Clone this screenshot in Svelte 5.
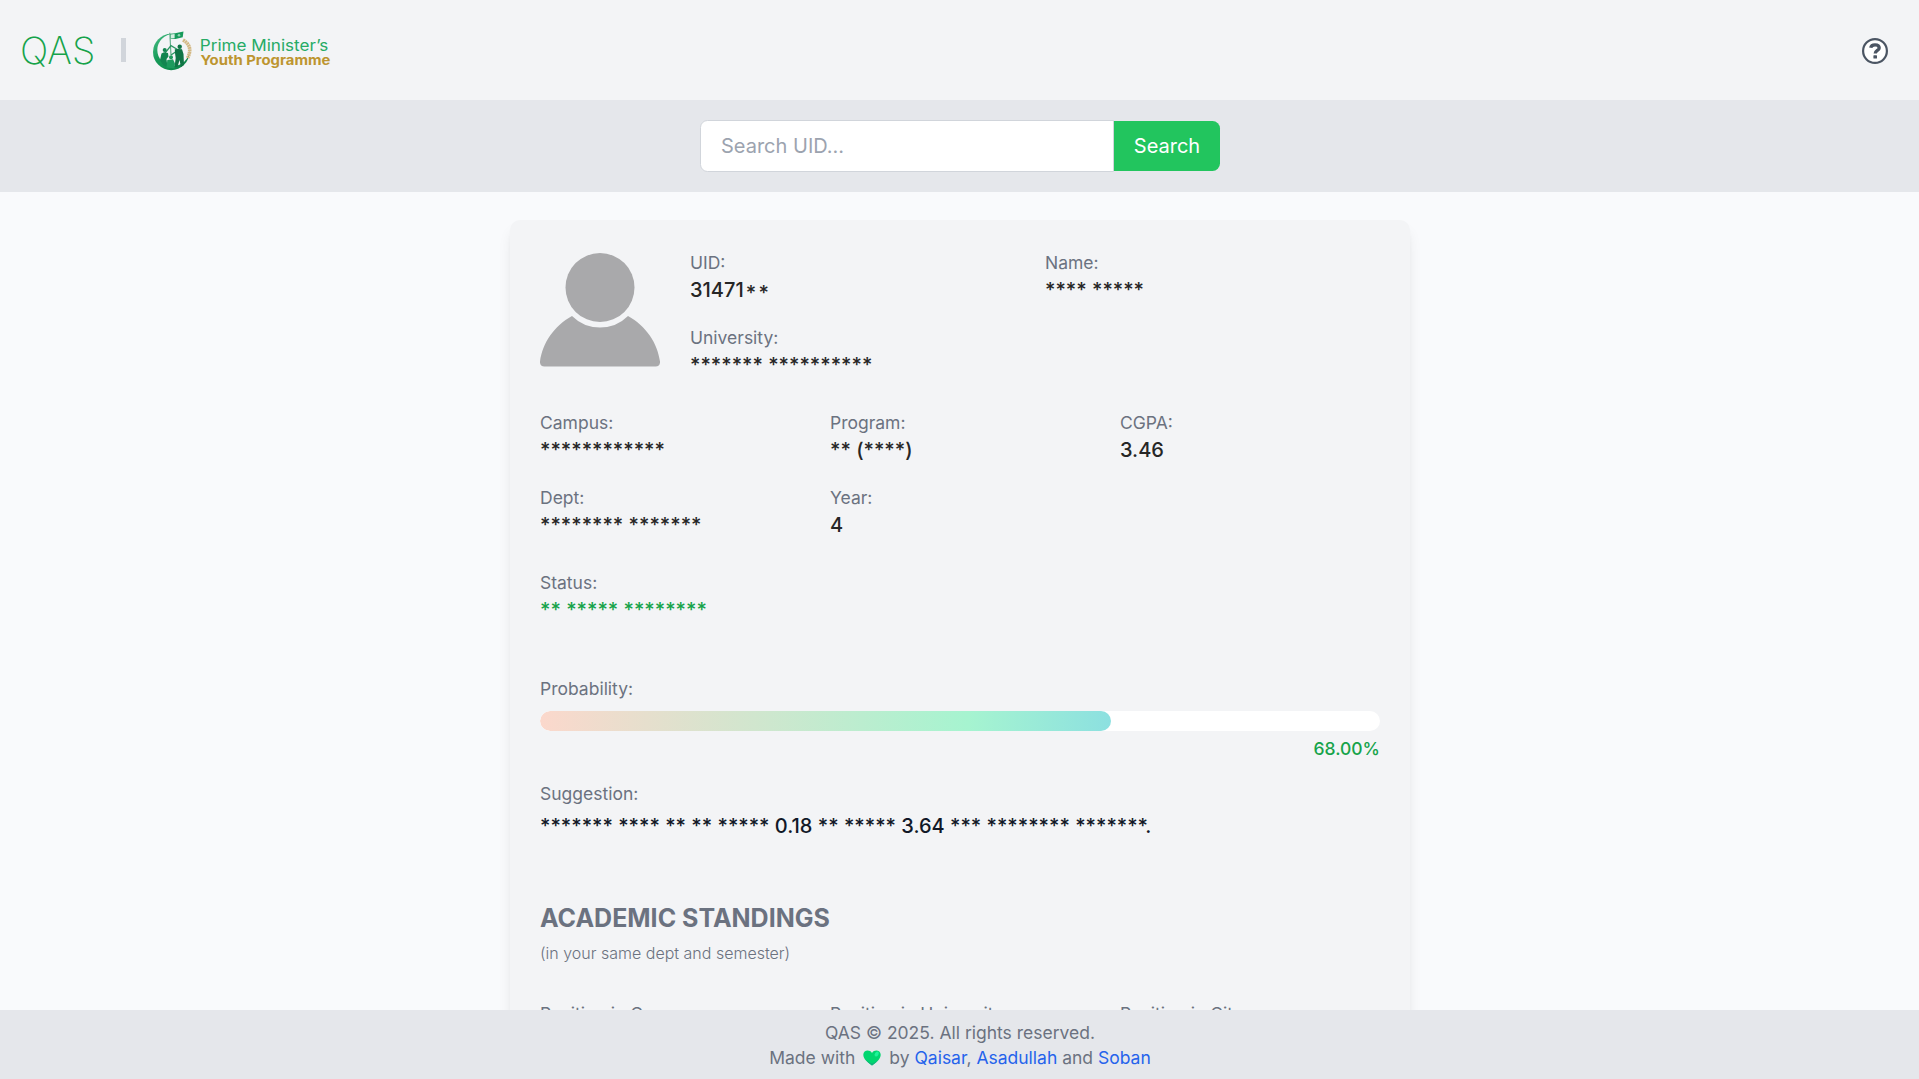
<script>
  const identity = [
    { label: 'UID:', value: '31471', masked: '**' },
    { label: 'Name:', value: '**** *****' },
    { label: 'University:', value: '******* **********' }
  ];
  const details = [
    { label: 'Campus:', value: '************' },
    { label: 'Program:', value: '** (****)' },
    { label: 'CGPA:', value: '3.46' },
    { label: 'Dept:', value: '******** *******' },
    { label: 'Year:', value: '4' }
  ];
  const standings = ['Position in Campus:', 'Position in University:', 'Position in City:'];
  const probability = 68;
</script>

<div class="page">
  <header class="topbar">
    <span class="brand">QAS</span>
    <span class="divider"></span>
    <svg class="programme" width="180" height="50" viewBox="0 0 180 50" aria-label="Prime Minister's Youth Programme">
      <defs>
        <linearGradient id="ring" x1="0" y1="0" x2="1" y2="1">
          <stop offset="0" stop-color="#4cc088" />
          <stop offset=".4" stop-color="#169a58" />
          <stop offset="1" stop-color="#0b8046" />
        </linearGradient>
        <mask id="crescent">
          <rect width="50" height="50" fill="#fff" />
          <circle cx="20.300" cy="25" r="16" fill="#000" />
        </mask>
      </defs>
      <circle cx="18.200" cy="27" r="18.200" fill="url(#ring)" mask="url(#crescent)" />
      <path d="M17 9L22 8.300L30.500 6.500L29.700 12.300L22.500 13.900L17.500 14Z" fill="#179a5b" />
      <path d="M17.600 9.400L21.600 8.900V13.200L17.900 13.400Z" fill="#d5eee1" />
      <circle cx="26" cy="10.300" r="1.300" fill="#8fd2b0" />
      <path d="M16.800 7.800L18 30" fill="none" stroke="#5aa983" stroke-width="1.100" />
      <path d="M30 15Q40.500 21 34.600 33" fill="none" stroke="#d3b883" stroke-width="3.600" stroke-dasharray="1.900 .5" />
      <path d="M12 28L18 20.700L24.500 24.500M18 30L22.500 27" fill="none" stroke="#2a9561" stroke-width="1.300" />
      <circle cx="11.700" cy="25" r="2" fill="#138550" />
      <path d="M8.500 28.500L11 27.200L15 28L15.500 31.500L13.500 34L14.500 42L10 40L7 35Z" fill="#138550" />
      <circle cx="26.700" cy="21.800" r="2.200" fill="#0f7445" />
      <path d="M21.800 24.300L25 24L29 24.300L30.500 29L31 40L28 42L26.500 35L24.500 42H21.500L22.700 33L22 28Z" fill="#0f7445" />
      <circle cx="18" cy="32.300" r="2" fill="#1d9a5d" />
      <path d="M14.300 35L20 34.300L22 38.500L21.500 43.500L13.500 42.500Z" fill="#1d9a5d" />
      <text class="pm" x="46.800" y="26" textLength="128.500" lengthAdjust="spacingAndGlyphs">Prime Minister’s</text>
      <text class="yp" x="47.400" y="40.300" textLength="130" lengthAdjust="spacingAndGlyphs">Youth Programme</text>
    </svg>
    <button class="help" aria-label="Help">
      <svg width="26" height="26" viewBox="0 0 26 26">
        <circle cx="13" cy="13" r="11.900" fill="#fff" stroke="#4b5563" stroke-width="2.200" />
        <path d="M8.700 9.700C9.100 7.600 10.600 6.800 13 6.800C15.700 6.800 17.200 8 17.200 9.900C17.200 12.500 13.200 12.400 13.200 15.600" fill="none" stroke="#4b5563" stroke-width="3.300" />
        <rect x="11.400" y="17.200" width="3.600" height="3.400" rx=".6" fill="#4b5563" />
      </svg>
    </button>
  </header>

  <form class="searchbar">
    <input type="text" placeholder="Search UID..." />
    <button type="button">Search</button>
  </form>

  <main>
    <article class="card">
      <section class="profile">
        <svg width="120" height="120" viewBox="0 0 120 120" aria-hidden="true">
          <circle cx="60" cy="37.500" r="34.500" fill="#a9a9ab" />
          <path d="M32 66Q43.500 77.500 60 77.500T88 66C106 76 117.500 93 120 111.500Q120.300 116.500 115.500 116.500H4.500Q-.3 116.500 0 111.500C2.500 93 14 76 32 66Z" fill="#a9a9ab" />
        </svg>
        <dl class="pairs">
          {#each identity as item}
            <div>
              <dt>{item.label}</dt>
              <dd>{item.value}{#if item.masked}<span class="masked">{item.masked}</span>{/if}</dd>
            </div>
          {/each}
        </dl>
      </section>

      <dl class="triples details">
        {#each details as item}
          <div><dt>{item.label}</dt><dd>{item.value}</dd></div>
        {/each}
      </dl>

      <dl class="status">
        <dt>Status:</dt>
        <dd>** ***** ********</dd>
      </dl>

      <section class="probability">
        <p class="label">Probability:</p>
        <div class="track"><div class="fill" style="width: {probability}%"></div></div>
        <p class="percent">{probability.toFixed(2)}%</p>
      </section>

      <section class="suggestion">
        <p class="label">Suggestion:</p>
        <p class="advice">******* **** ** ** ***** 0.18 ** ***** 3.64 *** ******** *******.</p>
      </section>

      <section class="standings">
        <h2>ACADEMIC STANDINGS</h2>
        <p class="note">(in your same dept and semester)</p>
        <dl class="triples">
          {#each standings as label}
            <div><dt>{label}</dt></div>
          {/each}
        </dl>
      </section>
    </article>
  </main>

  <footer>
    <p>QAS © 2025. All rights reserved.</p>
    <p class="credits">
      <span>Made with</span>
      <svg width="18" height="16" viewBox="0 0 18 16" aria-label="love">
        <path d="M9 15.500C4.500 12.500 .3 9 .3 4.800C.3 .2 6.500-.9 9 3C11.500-.9 17.700 .2 17.700 4.800C17.700 9 13.500 12.500 9 15.500Z" fill="#00d66f" />
        <path d="M2 8.500C3.500 11.500 6.500 13.700 9 15.500C12 13.500 14.500 11.500 16 9C13 12 11 13 9 13.500C6.500 12.500 4 11 2 8.500Z" fill="#12b27c" />
        <ellipse cx="13.700" cy="4" rx="1.800" ry="2.700" transform="rotate(32 13.700 4)" fill="#1cf59a" />
      </svg>
      <span>by <a href="#qaisar">Qaisar</a>, <a href="#asadullah">Asadullah</a> and <a href="#soban">Soban</a></span>
    </p>
  </footer>
</div>

<style>
  :global(body) {
    margin: 0;
    overflow: hidden;
  }
  .page {
    display: flex;
    flex-direction: column;
    height: 100vh;
    overflow: hidden;
    background: #f9fafc;
    color: #111827;
    font-family: Inter, sans-serif;
    font-size: 20px;
    line-height: 30px;
  }
  .page * {
    box-sizing: border-box;
  }
  p, h2, dl, dd {
    margin: 0;
  }
  .topbar {
    flex: none;
    display: flex;
    align-items: center;
    height: 100px;
    padding: 0 31px 0 20px;
    background: #f3f4f6;
  }
  .brand {
    width: 101px;
    color: #16a34a;
    font-size: 37.5px;
    font-weight: 200;
    line-height: 45px;
  }
  .divider {
    width: 5px;
    height: 24px;
    background: #d1d5db;
  }
  .programme {
    margin-left: 27px;
  }
  .pm, .yp {
    font-family: Inter, sans-serif;
  }
  .pm {
    fill: #27ab66;
    font-size: 16px;
  }
  .yp {
    fill: #bd9530;
    font-size: 13.4px;
    font-weight: 700;
  }
  .help {
    display: flex;
    margin: 1px 0 0 auto;
    padding: 0;
    border: 0;
    background: none;
  }
  .searchbar {
    flex: none;
    display: flex;
    align-items: center;
    justify-content: center;
    height: 92px;
    padding-left: 1px;
    background: #e5e7eb;
  }
  .searchbar input {
    width: 414px;
    height: 52px;
    padding: 10px 20px;
    border: 1px solid #d1d5db;
    border-radius: 7.5px 0 0 7.5px;
    background: #fff;
    font: 400 20px/30px Inter, sans-serif;
  }
  .searchbar input::placeholder {
    color: #9ca3af;
  }
  .searchbar button {
    width: 106px;
    height: 50px;
    padding: 0;
    border: 0;
    border-radius: 0 7.5px 7.5px 0;
    background: #22c55e;
    color: #fff;
    font: 400 20px/30px Inter, sans-serif;
  }
  main {
    flex: 1;
    min-height: 0;
    display: flex;
    justify-content: center;
    align-items: flex-start;
    padding: 28px 0 0 1px;
    overflow: hidden;
  }
  .card {
    width: 900px;
    height: 1000px;
    padding: 30px;
    border-radius: 10px;
    background: #f3f4f6;
    box-shadow: 0 10px 15px -3px rgb(0 0 0 / 0.1), 0 4px 6px -4px rgb(0 0 0 / 0.1);
  }
  .profile {
    display: flex;
    gap: 30px;
  }
  .pairs {
    flex: 1;
    display: grid;
    grid-template-columns: 1fr 1fr;
    gap: 20px;
  }
  .triples {
    display: grid;
    grid-template-columns: repeat(3, 1fr);
    gap: 20px 30px;
  }
  .details, .status {
    margin-top: 30px;
  }
  dt, .label {
    color: #6b7280;
    font-size: 17.5px;
    line-height: 25px;
  }
  dd {
    color: #262626;
    font-weight: 500;
  }
  /* Mask characters sit centred on the digits beside them */
  .masked {
    display: inline-block;
    margin-left: 2px;
    letter-spacing: 2.5px;
    line-height: 20px;
    transform: translateY(3px);
  }
  .status dd {
    color: #16a34a;
  }
  .probability {
    margin-top: 51px;
  }
  .track {
    height: 20px;
    margin-top: 10px;
    border-radius: 10px;
    background: #fff;
    overflow: hidden;
  }
  .fill {
    height: 100%;
    border-radius: 10px;
    background: linear-gradient(90deg, #fbd8cc, #a6f4d0 75%, #8ce0e0);
  }
  .percent {
    margin-top: 5px;
    color: #16a34a;
    font-size: 17.5px;
    font-weight: 500;
    line-height: 25px;
    text-align: right;
  }
  .suggestion {
    margin-top: 20px;
  }
  .advice {
    margin-top: 5px;
    font-weight: 500;
  }
  .standings {
    margin-top: 60px;
  }
  h2 {
    color: #6b7280;
    font-size: 25px;
    font-weight: 700;
    line-height: 35px;
  }
  .note {
    margin: 5px 0 35px;
    color: #6b7280;
    font-size: 16px;
    font-weight: 300;
    line-height: 25px;
  }
  footer {
    flex: none;
    height: 69px;
    padding: 10px 0 0 1px;
    background: #e5e7eb;
    color: #6b7280;
    font-size: 17.5px;
    line-height: 25px;
    text-align: center;
  }
  .credits {
    display: flex;
    justify-content: center;
    align-items: center;
    gap: 8px;
  }
  a {
    color: #2563eb;
    text-decoration: none;
  }
</style>
